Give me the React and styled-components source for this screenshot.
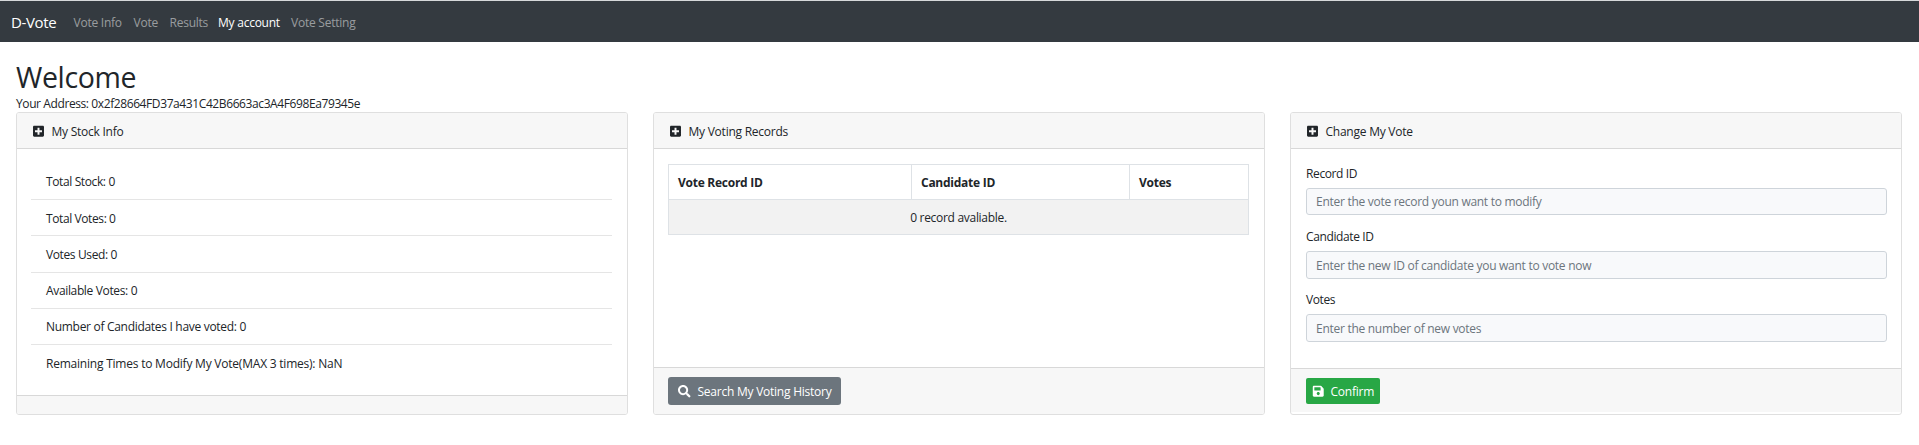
import React from "react";
import styled, { createGlobalStyle } from "styled-components";
import { FaPlusSquare, FaSearch, FaSave } from "react-icons/fa";

const GlobalStyle = createGlobalStyle`
  *, *::before, *::after { box-sizing: border-box; }
  body {
    margin: 0;
    background: #fff;
    color: #212529;
    font: 400 12px/18px "Open Sans", "Noto Sans", sans-serif;
    overflow: hidden;
  }
`;

const Text = styled.span`
  white-space: nowrap;
  letter-spacing: ${(p) => p.$ls ?? -0.24}px;
`;

const Navbar = styled.nav`
  display: flex;
  align-items: center;
  height: 42px;
  padding: 2px 0 0 11px;
  border-top: 1px solid #d6d8da;
  background: #343a40;
`;

const Brand = styled.a`
  width: 62.5px;
  padding-bottom: 2px;
  color: #fff;
  font-size: 15px;
  line-height: 22px;
`;

const NavLink = styled.a`
  width: ${(p) => p.$w}px;
  color: ${(p) => (p.$active ? "#fff" : "rgba(255, 255, 255, 0.5)")};
`;

const Main = styled.main`
  padding: 17px 17px 0 16px;
`;

const Title = styled.h1`
  margin: 0;
  font-size: 28.5px;
  font-weight: 400;
  letter-spacing: -0.35px;
  line-height: 36px;
`;

const Address = styled.div`
  height: 17px;
  line-height: 18px;
`;

const Cards = styled.div`
  display: grid;
  grid-template-columns: repeat(3, 612px);
  column-gap: 25px;
`;

const Card = styled.section`
  display: flex;
  flex-direction: column;
  height: 303px;
  border: 1px solid #dfdfdf;
  border-radius: 3px;
  overflow: hidden;
`;

const CardHeader = styled.header`
  display: flex;
  align-items: center;
  gap: 8px;
  height: 36px;
  padding: 2px 0 0 15.5px;
  border-bottom: 1px solid #d8d8d8;
  background: #f7f7f7;

  svg { width: 11px; height: 12.5px; }
`;

const CardBody = styled.div`
  flex: 1;
  padding: ${(p) => p.$top}px 14px 0 ${(p) => p.$left || 14}px;
`;

const CardFooter = styled.footer`
  height: ${(p) => p.$h}px;
  margin-bottom: ${(p) => p.$gap || 0}px;
  padding: 9px 14px 0 ${(p) => p.$left || 14}px;
  border-top: 1px solid #d8d8d8;
  background: #f7f7f7;
`;

const List = styled.ul`
  margin: 0;
  padding: 0;
  list-style: none;
`;

const ListItem = styled.li`
  width: 581px;
  height: 36.25px;
  padding: 9.5px 15px 0;
  border-bottom: 1px solid #e5e5e5;

  &:last-child { border-bottom: 0; }
`;

const Table = styled.table`
  width: 581px;
  table-layout: fixed;
  border-collapse: separate;
  border-spacing: 0;
  border: solid #dee2e6;
  border-width: 1px 0 0 1px;
`;

const Cell = styled.td`
  width: ${(p) => p.$w}px;
  height: 35px;
  padding: 2px 9px 0;
  border: solid #dee2e6;
  border-width: 0 1px 1px 0;
  background: ${(p) => (p.$shaded ? "#f2f2f2" : "#fff")};
  text-align: ${(p) => (p.$shaded ? "center" : "left")};
  font-weight: ${(p) => (p.as === "th" ? 700 : 400)};
`;

const Label = styled.label`
  display: block;
  height: 18px;
  margin-bottom: 5px;
`;

const Input = styled.input`
  display: block;
  width: 581px;
  height: ${(p) => p.$h}px;
  margin: 0 0 ${(p) => p.$mb}px;
  padding: 0 9px;
  border: 1px solid #ced4da;
  border-radius: 3px;
  background: #f8f9fb;
  font: inherit;
  letter-spacing: -0.28px;

  &::placeholder { color: #6c757d; opacity: 1; }
`;

const Button = styled.button`
  display: flex;
  align-items: center;
  gap: ${(p) => p.$gap}px;
  width: ${(p) => p.$w}px;
  height: ${(p) => p.$h}px;
  padding: ${(p) => p.$pt || 0}px 0 0 ${(p) => p.$pl}px;
  border: 0;
  border-radius: ${(p) => p.$radius}px;
  background: ${(p) => p.$bg};
  color: #fff;
  font: inherit;
`;

const links = [
  { label: "Vote Info", w: 60 },
  { label: "Vote", w: 36 },
  { label: "Results", w: 48.5 },
  { label: "My account", w: 73 },
  { label: "Vote Setting", w: 80 },
];

const stock = [
  { label: "Total Stock: 0", ls: -0.38 },
  { label: "Total Votes: 0", ls: -0.4 },
  { label: "Votes Used: 0", ls: -0.38 },
  { label: "Available Votes: 0", ls: -0.35 },
  { label: "Number of Candidates I have voted: 0", ls: -0.3 },
  { label: "Remaining Times to Modify My Vote(MAX 3 times): NaN", ls: -0.22 },
];

const columns = [
  { label: "Vote Record ID", w: 243 },
  { label: "Candidate ID", w: 218 },
  { label: "Votes", w: 119 },
];

const fields = [
  { label: "Record ID", hint: "Enter the vote record youn want to modify", h: 27, mb: 13 },
  { label: "Candidate ID", hint: "Enter the new ID of candidate you want to vote now", h: 28, mb: 12 },
  { label: "Votes", hint: "Enter the number of new votes", h: 28, mb: 0 },
];

export default function App() {
  return (
    <>
      <GlobalStyle />
      <Navbar>
        <Brand><Text $ls={-0.35}>D-Vote</Text></Brand>
        {links.map((l) => (
          <NavLink key={l.label} $w={l.w} $active={l.label === "My account"}>
            <Text>{l.label}</Text>
          </NavLink>
        ))}
      </Navbar>
      <Main>
        <Title>Welcome</Title>
        <Address><Text $ls={-0.4}>Your Address: 0x2f28664FD37a431C42B6663ac3A4F698Ea79345e</Text></Address>
        <Cards>
          <Card>
            <CardHeader><FaPlusSquare /><Text>My Stock Info</Text></CardHeader>
            <CardBody $top={14.75}>
              <List>
                {stock.map((s) => (
                  <ListItem key={s.label}><Text $ls={s.ls}>{s.label}</Text></ListItem>
                ))}
              </List>
            </CardBody>
            <CardFooter $h={19} />
          </Card>
          <Card>
            <CardHeader><FaPlusSquare /><Text>My Voting Records</Text></CardHeader>
            <CardBody $top={15}>
              <Table>
                <thead>
                  <tr>
                    {columns.map((c) => (
                      <Cell as="th" key={c.label} $w={c.w}><Text $ls={-0.26}>{c.label}</Text></Cell>
                    ))}
                  </tr>
                </thead>
                <tbody>
                  <tr><Cell colSpan={3} $shaded><Text $ls={-0.3}>0 record avaliable.</Text></Cell></tr>
                </tbody>
              </Table>
            </CardBody>
            <CardFooter $h={47}>
              <Button $w={173} $h={28} $pl={10} $pt={1} $gap={7} $radius={3} $bg="#6c757d">
                <FaSearch size={12.5} /><Text>Search My Voting History</Text>
              </Button>
            </CardFooter>
          </Card>
          <Card>
            <CardHeader><FaPlusSquare /><Text>Change My Vote</Text></CardHeader>
            <CardBody $top={16} $left={15}>
              {fields.map((f) => (
                <React.Fragment key={f.label}>
                  <Label><Text $ls={-0.38}>{f.label}</Text></Label>
                  <Input placeholder={f.hint} $h={f.h} $mb={f.mb} />
                </React.Fragment>
              ))}
            </CardBody>
            <CardFooter $h={44} $gap={2} $left={15}>
              <Button $w={74} $h={26} $pl={6} $pt={1} $gap={6} $radius={2} $bg="#28a745">
                <FaSave size={12.5} /><Text>Confirm</Text>
              </Button>
            </CardFooter>
          </Card>
        </Cards>
      </Main>
    </>
  );
}
